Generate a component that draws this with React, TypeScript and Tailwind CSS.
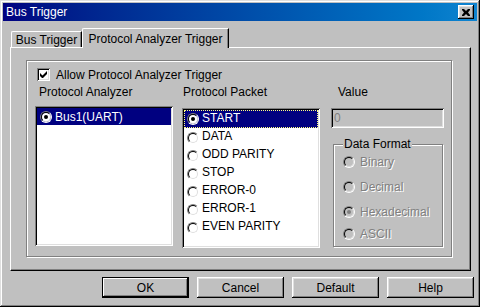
const raised =
  "shadow-[inset_-1px_-1px_0_#000,inset_1px_1px_0_#fff,inset_-2px_-2px_0_#808080,inset_2px_2px_0_#dfdfdf]";
const sunken =
  "shadow-[inset_1px_1px_0_#808080,inset_-1px_-1px_0_#fff,inset_2px_2px_0_#000,inset_-2px_-2px_0_#dfdfdf]";

function Radio({ checked, disabled }: { checked?: boolean; disabled?: boolean }) {
  return (
    <span className="flex w-[12px] h-[12px] shrink-0 rounded-full border border-t-[#808080] border-l-[#808080] border-r-white border-b-white">
      <span
        className={`flex flex-1 items-center justify-center rounded-full border border-t-black border-l-black border-r-[#dfdfdf] border-b-[#dfdfdf] ${
          disabled ? "bg-[#c0c0c0]" : "bg-white"
        }`}
      >
        {checked && (
          <span className={`w-[4px] h-[4px] rounded-full ${disabled ? "bg-[#808080]" : "bg-black"}`} />
        )}
      </span>
    </span>
  );
}

function Button({ label, isDefault }: { label: string; isDefault?: boolean }) {
  return (
    <div
      className={`w-[87px] h-[21px] flex items-center justify-center bg-[#c0c0c0] ${
        isDefault
          ? "border border-black shadow-[inset_-1px_-1px_0_#000,inset_1px_1px_0_#fff,inset_-2px_-2px_0_#808080]"
          : raised
      }`}
    >
      {label}
    </div>
  );
}

const packets = ["START", "DATA", "ODD PARITY", "STOP", "ERROR-0", "ERROR-1", "EVEN PARITY"];
const formats = [
  { label: "Binary", mt: "mt-[4px]" },
  { label: "Decimal", mt: "mt-[11px]" },
  { label: "Hexadecimal", mt: "mt-[11px]", checked: true },
  { label: "ASCII", mt: "mt-[8px]" },
];

export default function App() {
  return (
    <div
      className="w-[480px] h-[307px] bg-[#c0c0c0] p-[3px] flex flex-col text-[12px] leading-[14px] text-black shadow-[inset_-1px_-1px_0_#000,inset_1px_1px_0_#dfdfdf,inset_-2px_-2px_0_#808080,inset_2px_2px_0_#fff]"
      style={{ fontFamily: '"Liberation Sans", Arial, sans-serif' }}
    >
      {/* title bar */}
      <div className="h-[18px] flex items-center justify-between pl-[3px] pr-[3px] bg-gradient-to-r from-[#000080] to-[#1084d0]">
        <span className="text-white">Bus Trigger</span>
        <div className={`w-[16px] h-[14px] flex items-center justify-center bg-[#c0c0c0] ${raised}`}>
          <svg width="8" height="7" viewBox="0 0 8 7">
            <path d="M0 0h2l2 2 2-2h2v1L6 3.5 8 6v1H6L4 5 2 7H0V6l2-2.5L0 1z" fill="#000" />
          </svg>
        </div>
      </div>

      {/* tabs */}
      <div className="mt-[7px] ml-[7px] h-[19px] flex items-end relative z-10">
        <div className="ml-[1px] w-[71px] h-[16px] flex items-center justify-center border-l border-t border-white rounded-tl-[2px] shadow-[inset_-1px_0_0_#808080] border-r border-r-black">
          Bus Trigger
        </div>
        <div className="w-[147px] h-[20px] -mb-[1px] flex items-start pt-[3px] justify-center bg-[#c0c0c0] border-l border-t border-white rounded-tl-[2px] border-r border-r-black shadow-[inset_-1px_0_0_#808080]">
          Protocol Analyzer Trigger
        </div>
      </div>

      {/* tab panel */}
      <div className="ml-[7px] w-[461px] h-[224px] border-l border-t border-white border-r border-b border-r-black border-b-black shadow-[inset_-1px_-1px_0_#808080] pl-[15px] pt-[12px]">
        <div className="w-[426px] h-[197px] border border-[#808080] shadow-[inset_1px_1px_0_#fff,1px_1px_0_#fff] flex flex-col pl-[8px] pt-[7px]">
          <div className="ml-[2px] flex items-center h-[13px]">
            <span className={`w-[13px] h-[13px] bg-white flex items-center justify-center ${sunken}`}>
              <svg width="7" height="7" viewBox="0 0 7 7">
                <path d="M0 2v3l2 2h1l4-4V0L2.5 4.5z" fill="#000" />
              </svg>
            </span>
            <span className="ml-[6px]">Allow Protocol Analyzer Trigger</span>
          </div>

          <div className="mt-[3px] flex">
            {/* Protocol Analyzer */}
            <div className="w-[138px] flex flex-col">
              <div className="mt-[1px] pl-[4px] h-[14px]">Protocol Analyzer</div>
              <div className={`mt-[7px] h-[140px] bg-white p-[2px] ${sunken}`}>
                <div className="h-[17px] bg-[#000080] text-white flex items-center pl-[3px]">
                  <Radio checked />
                  <span className="ml-[3px]">Bus1(UART)</span>
                </div>
              </div>
            </div>

            {/* Protocol Packet */}
            <div className="ml-[9px] w-[138px] flex flex-col">
              <div className="mt-[1px] pl-[1px] h-[14px]">Protocol Packet</div>
              <div className={`mt-[9px] h-[140px] bg-white p-[2px] ${sunken}`}>
                {packets.map((p, i) => (
                  <div
                    key={p}
                    className={`h-[18px] flex items-start pl-[2px] ${
                      i === 0 ? "bg-[#000080] text-white border border-dotted border-[#ffff80]" : ""
                    }`}
                  >
                    <span className={i === 0 ? "mt-[2px]" : "mt-[4px] ml-[1px]"}>
                      <Radio checked={i === 0} />
                    </span>
                    <span className={i === 0 ? "ml-[3px]" : "ml-[3px] mt-[1px]"}>{p}</span>
                  </div>
                ))}
              </div>
            </div>

            {/* Value + Data Format */}
            <div className="ml-[11px] w-[113px] flex flex-col">
              <div className="mt-[1px] pl-[7px] h-[14px]">Value</div>
              <div className={`mt-[9px] h-[20px] flex items-center pl-[3px] text-[#808080] ${sunken}`}>
                0
              </div>
              <div className="ml-[2px] mt-[16px] w-[110px] h-[103px] border border-[#808080] shadow-[inset_1px_1px_0_#fff,1px_1px_0_#fff] flex flex-col pl-[9px]">
                <span className="-mt-[8px] self-start bg-[#c0c0c0] px-[1px]">Data Format</span>
                {formats.map((f) => (
                  <div key={f.label} className={`flex items-center h-[14px] ${f.mt}`}>
                    <Radio checked={f.checked} disabled />
                    <span className="ml-[5px] text-[#808080] [text-shadow:1px_1px_0_#fff]">{f.label}</span>
                  </div>
                ))}
              </div>
            </div>
          </div>
        </div>
      </div>

      {/* buttons */}
      <div className="mt-[6px] pr-[3px] flex justify-end gap-[8px]">
        <Button label="OK" isDefault />
        <Button label="Cancel" />
        <Button label="Default" />
        <Button label="Help" />
      </div>
    </div>
  );
}
